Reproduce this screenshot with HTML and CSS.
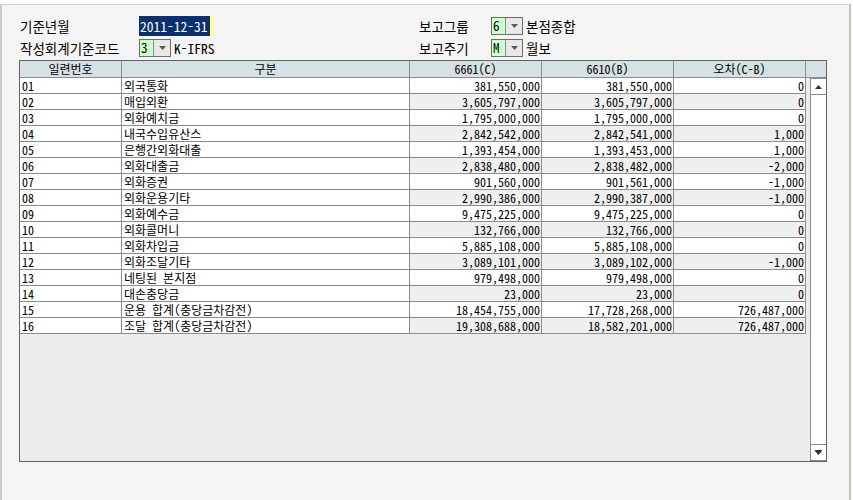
FILE: index.html
```html
<!DOCTYPE html>
<html lang="ko">
<head>
<meta charset="utf-8">
<link rel="stylesheet" href="styles.css">
</head>
<body>
<div class="window">
  <div class="form">
    <div class="label">기준년월</div>
    <div class="ctrl"><div class="date"><span class="sel">2011-12-31</span></div></div>
    <div class="label">보고그룹</div>
    <div class="ctrl"><div class="combo"><span class="val">6</span><span class="btn"><svg width="7" height="4" viewBox="0 0 7 4"><path d="M0 0H7L3.5 4Z" fill="#5a5a5a"/></svg></span></div><span class="after">본점종합</span></div>
    <div class="label">작성회계기준코드</div>
    <div class="ctrl"><div class="combo"><span class="val">3</span><span class="btn"><svg width="7" height="4" viewBox="0 0 7 4"><path d="M0 0H7L3.5 4Z" fill="#5a5a5a"/></svg></span></div><span class="after">K-IFRS</span></div>
    <div class="label">보고주기</div>
    <div class="ctrl"><div class="combo"><span class="val">M</span><span class="btn"><svg width="7" height="4" viewBox="0 0 7 4"><path d="M0 0H7L3.5 4Z" fill="#5a5a5a"/></svg></span></div><span class="after">월보</span></div>
  </div>

  <div class="grid">
    <div class="head">
      <div class="hc">일련번호</div>
      <div class="hc">구분</div>
      <div class="hc">6661(C)</div>
      <div class="hc">6610(B)</div>
      <div class="hc">오차(C-B)</div>
      <div class="hc blank"></div>
    </div>
    <div class="body">
      <div class="rows">
        <div class="row"><div class="c">01</div><div class="c">외국통화</div><div class="c n">381,550,000</div><div class="c n">381,550,000</div><div class="c n">0</div></div>
        <div class="row alt"><div class="c">02</div><div class="c">매입외환</div><div class="c n">3,605,797,000</div><div class="c n">3,605,797,000</div><div class="c n">0</div></div>
        <div class="row"><div class="c">03</div><div class="c">외화예치금</div><div class="c n">1,795,000,000</div><div class="c n">1,795,000,000</div><div class="c n">0</div></div>
        <div class="row alt"><div class="c">04</div><div class="c">내국수입유산스</div><div class="c n">2,842,542,000</div><div class="c n">2,842,541,000</div><div class="c n">1,000</div></div>
        <div class="row"><div class="c">05</div><div class="c">은행간외화대출</div><div class="c n">1,393,454,000</div><div class="c n">1,393,453,000</div><div class="c n">1,000</div></div>
        <div class="row alt"><div class="c">06</div><div class="c">외화대출금</div><div class="c n">2,838,480,000</div><div class="c n">2,838,482,000</div><div class="c n">-2,000</div></div>
        <div class="row"><div class="c">07</div><div class="c">외화증권</div><div class="c n">901,560,000</div><div class="c n">901,561,000</div><div class="c n">-1,000</div></div>
        <div class="row alt"><div class="c">08</div><div class="c">외화운용기타</div><div class="c n">2,990,386,000</div><div class="c n">2,990,387,000</div><div class="c n">-1,000</div></div>
        <div class="row"><div class="c">09</div><div class="c">외화예수금</div><div class="c n">9,475,225,000</div><div class="c n">9,475,225,000</div><div class="c n">0</div></div>
        <div class="row alt"><div class="c">10</div><div class="c">외화콜머니</div><div class="c n">132,766,000</div><div class="c n">132,766,000</div><div class="c n">0</div></div>
        <div class="row"><div class="c">11</div><div class="c">외화차입금</div><div class="c n">5,885,108,000</div><div class="c n">5,885,108,000</div><div class="c n">0</div></div>
        <div class="row alt"><div class="c">12</div><div class="c">외화조달기타</div><div class="c n">3,089,101,000</div><div class="c n">3,089,102,000</div><div class="c n">-1,000</div></div>
        <div class="row"><div class="c">13</div><div class="c">네팅된 본지점</div><div class="c n">979,498,000</div><div class="c n">979,498,000</div><div class="c n">0</div></div>
        <div class="row alt"><div class="c">14</div><div class="c">대손충당금</div><div class="c n">23,000</div><div class="c n">23,000</div><div class="c n">0</div></div>
        <div class="row"><div class="c">15</div><div class="c">운용 합계(충당금차감전)</div><div class="c n">18,454,755,000</div><div class="c n">17,728,268,000</div><div class="c n">726,487,000</div></div>
        <div class="row alt"><div class="c">16</div><div class="c">조달 합계(충당금차감전)</div><div class="c n">19,308,688,000</div><div class="c n">18,582,201,000</div><div class="c n">726,487,000</div></div>
      </div>
      <div class="scroll">
        <div class="sbtn up"><svg width="7" height="4" viewBox="0 0 7 4"><path d="M3.5 0L7 4H0Z" fill="#333"/></svg></div>
        <div class="strack"></div>
        <div class="sbtn down"><svg width="7" height="5" viewBox="0 0 7 5"><path d="M0 0H7V1H0ZM0 1H7L3.5 5Z" fill="#333"/></svg></div>
      </div>
    </div>
  </div>
</div>
</body>
</html>
```

FILE: styles.css
```css
html, body {
  margin: 0;
  padding: 0;
  background: #ffffff;
}

body {
  font-family: "Noto Sans Mono CJK KR", "Noto Sans CJK KR", "Liberation Sans", sans-serif;
  color: #000;
}

.window {
  margin-top: 4px;
  width: 851px;
  height: 496px;
  box-sizing: border-box;
  background: #f4f4f4;
  border-top: 1px solid #d4d4de;
  border-left: 2px solid #cbcbc3;
  border-right: 2px solid #c6c6be;
  padding-top: 11px;
}

.form {
  display: grid;
  grid-template-columns: 119px 280px 72px auto;
  grid-template-rows: 20px 18px;
  row-gap: 3px;
  padding-left: 18px;
  font-size: 13.5px;
}

.label {
  display: flex;
  align-items: center;
  line-height: 16px;
  white-space: nowrap;
}

.ctrl {
  display: flex;
  align-items: center;
}

.date {
  width: 75px;
  height: 20px;
  background: #ffff99;
  display: flex;
}

.date .sel {
  width: 71px;
  background: #0b306e;
  color: #fff;
  font-size: 13.5px;
  line-height: 20px;
  padding-left: 1px;
  box-sizing: border-box;
  white-space: nowrap;
  overflow: hidden;
}

.combo {
  display: flex;
  width: 32px;
  height: 18px;
  box-sizing: border-box;
  border: 1px solid #6e6e6e;
}

.combo .val {
  width: 14px;
  background: #ccffcc;
  border-right: 1px solid #8c8c8c;
  font-size: 13px;
  line-height: 16px;
  padding-left: 1px;
  box-sizing: border-box;
}

.combo .btn {
  flex: 1;
  background: #e8e8e8;
  display: flex;
  align-items: center;
  justify-content: center;
}

.after {
  margin-left: 3px;
  line-height: 16px;
  white-space: nowrap;
}

.grid {
  margin-top: 3px;
  margin-left: 17px;
  width: 808px;
  height: 402px;
  box-sizing: border-box;
  border: 1px solid #646464;
  background: #ececec;
  font-size: 12px;
}

.head {
  display: grid;
  grid-template-columns: 102px 288px 132px 132px 132px 20px;
  height: 17px;
  background: #d5e1e5;
}

.hc {
  box-sizing: border-box;
  border-right: 1px solid #8c8c8c;
  border-bottom: 1px solid #8c8c8c;
  text-align: center;
  line-height: 16px;
}

.hc.blank {
  border-right: none;
}

.body {
  display: flex;
  height: 383px;
}

.rows {
  width: 786px;
}

.row {
  display: grid;
  grid-template-columns: 102px 288px 132px 132px 132px;
  height: 16px;
}

.c {
  box-sizing: border-box;
  border-right: 1px solid #8c8c8c;
  border-bottom: 1px solid #8c8c8c;
  background: #ffffff;
  line-height: 15px;
  padding-left: 2px;
  white-space: nowrap;
  overflow: hidden;
}

.c.n {
  text-align: right;
  padding-left: 0;
  padding-right: 1px;
}

.row.alt .c.n {
  background: #efefef;
}

.scroll {
  margin-left: 4px;
  width: 16px;
  height: 383px;
  box-sizing: border-box;
  border-left: 1px solid #8c8c8c;
  border-top: 1px solid #8c8c8c;
  border-bottom: 1px solid #8c8c8c;
  background: #ffffff;
  display: flex;
  flex-direction: column;
}

.sbtn {
  height: 16px;
  box-sizing: border-box;
  display: flex;
  align-items: center;
  justify-content: center;
}

.sbtn.up {
  border-bottom: 1px solid #8c8c8c;
}

.sbtn.down {
  border-top: 1px solid #8c8c8c;
}

.strack {
  flex: 1;
}
```
